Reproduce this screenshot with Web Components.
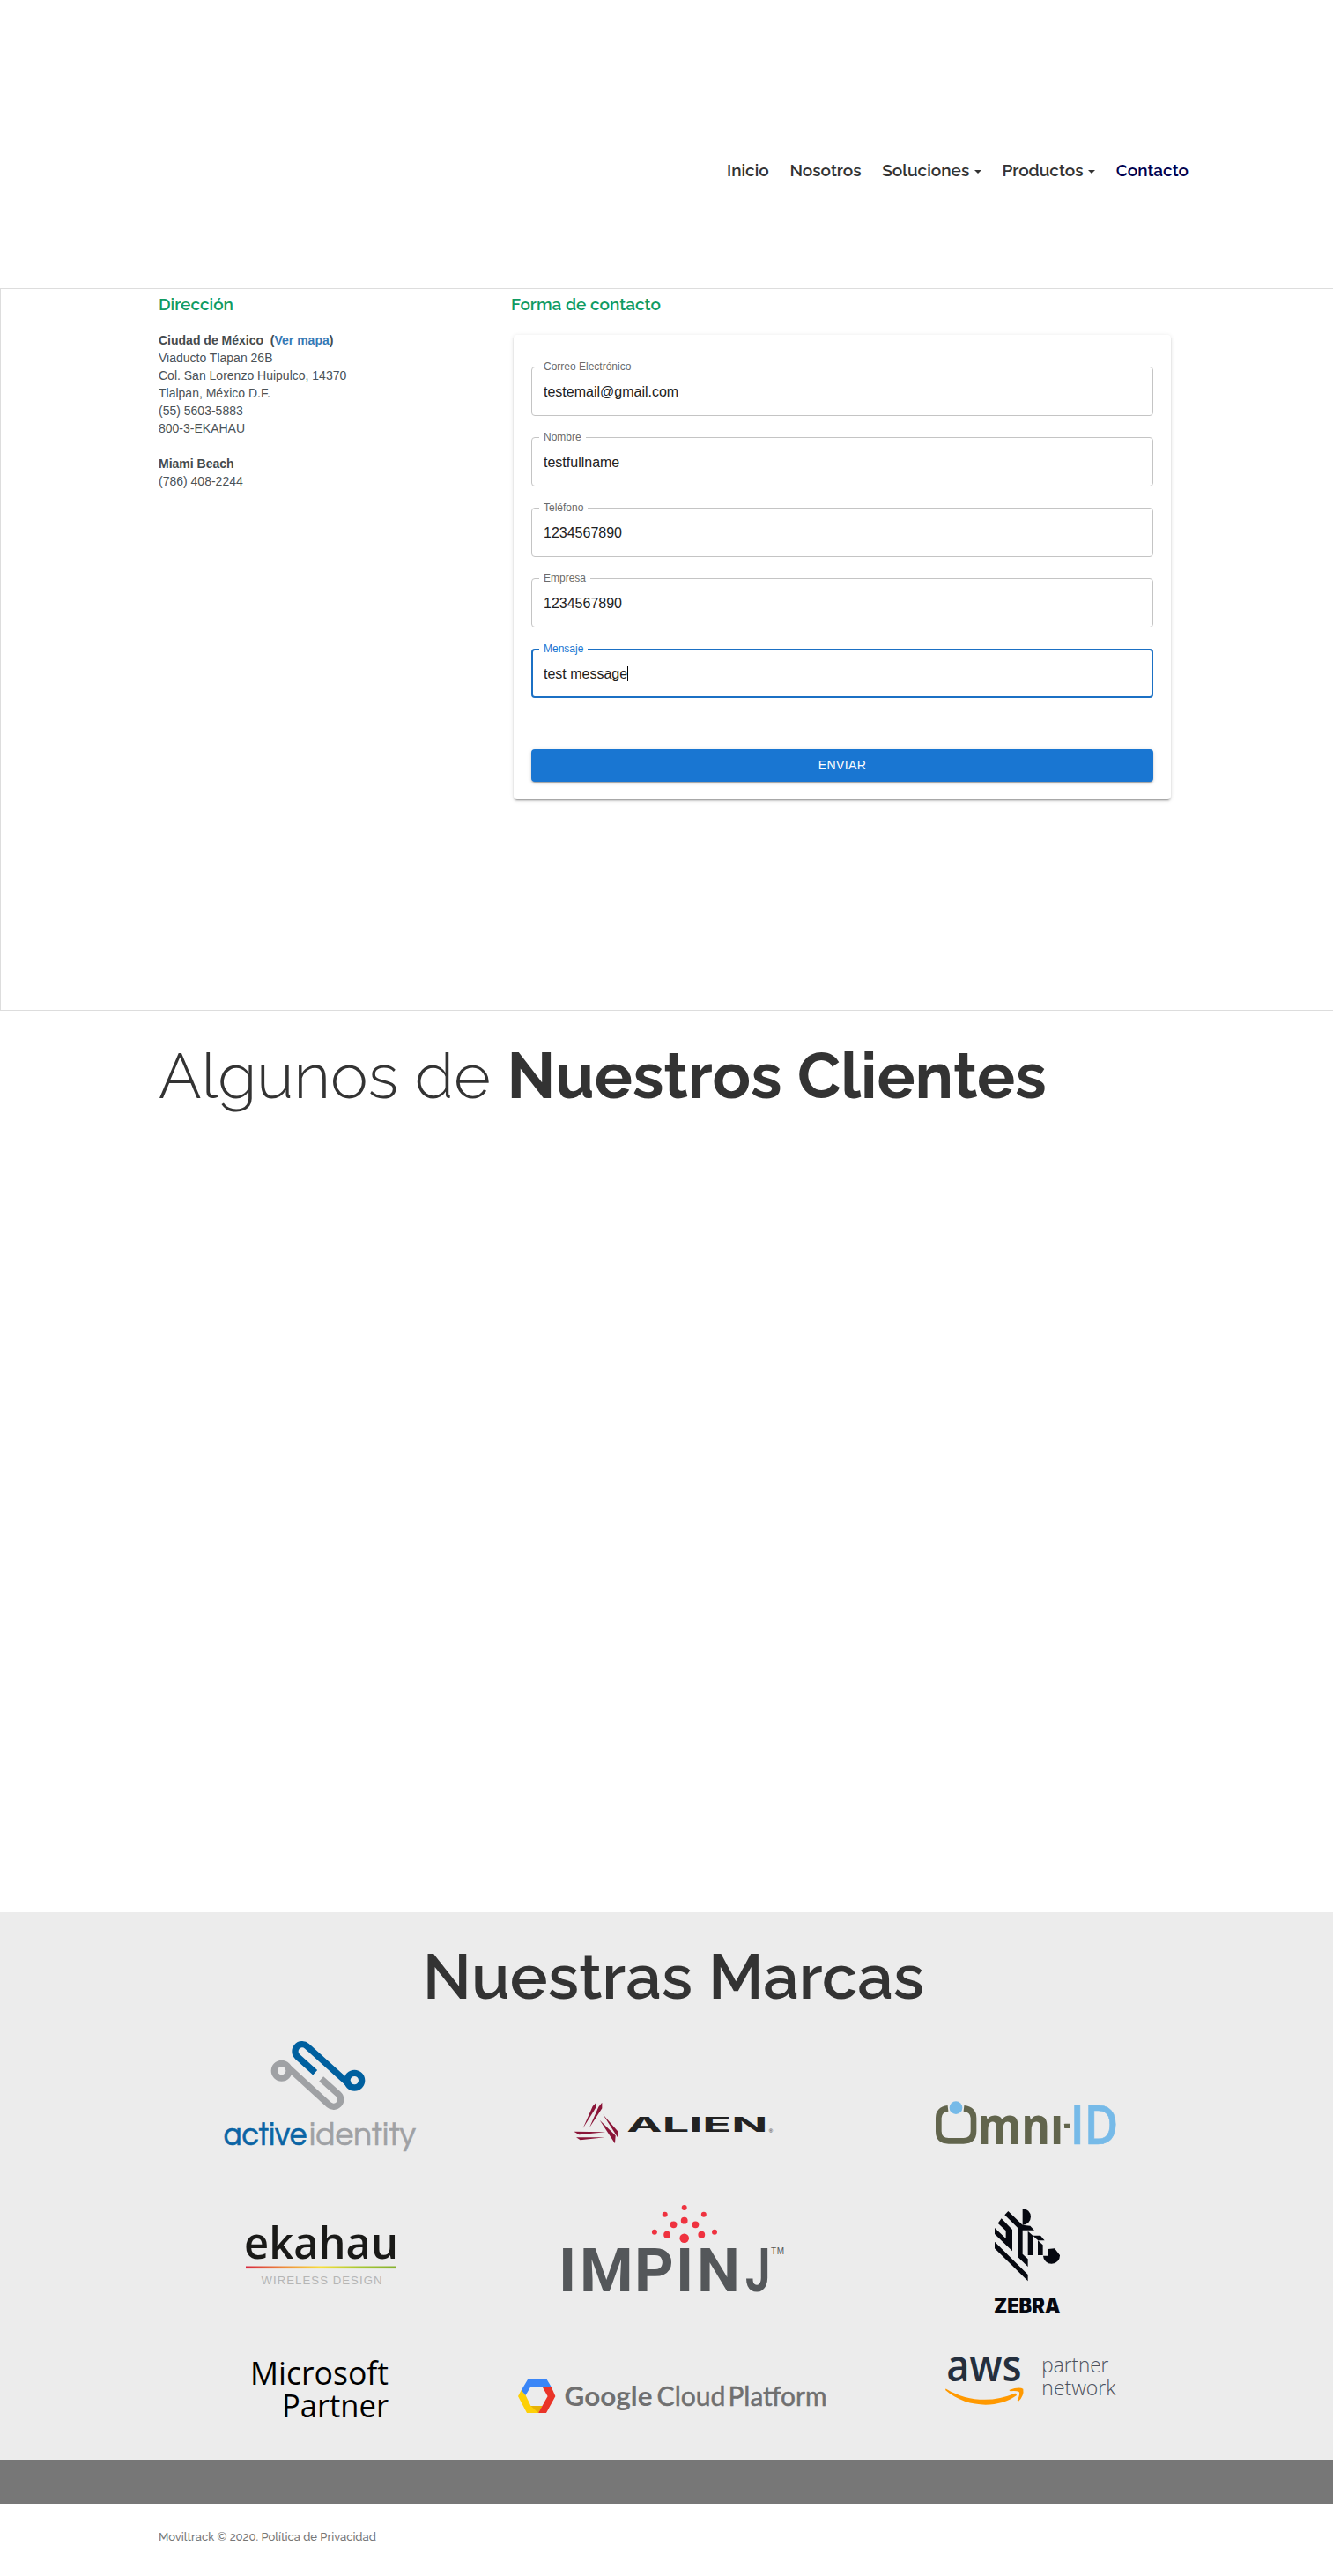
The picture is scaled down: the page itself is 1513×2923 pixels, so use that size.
<!DOCTYPE html>
<html lang="es">
<head>
<meta charset="utf-8">
<title>Moviltrack - Contacto</title>
<style>
html,body{margin:0;padding:0;background:#fff}
body{font-family:"Liberation Sans",Arial,sans-serif;font-size:14px;line-height:20px;color:#333}
</style>
</head>
<body>
<contact-page></contact-page>
<script>
const define = (name, html, setup) => {
  const t = document.createElement('template');
  t.innerHTML = html;
  customElements.define(name, class extends HTMLElement {
    connectedCallback() {
      if (this.shadowRoot) return;
      const root = this.attachShadow({mode: 'open'});
      root.append(t.content.cloneNode(true));
      if (setup) setup(this, root);
    }
  });
};

define('nav-item', `<style>:host{display:flex;align-items:center;gap:5.5px;color:#333;font:600 19px/20px Raleway,Lato,sans-serif}
:host([active]){color:#00004f}
i{display:none;border:4px solid transparent;border-top-color:currentColor;border-bottom:0;margin-top:3px}
:host([menu]) i{display:block}</style><slot></slot><i></i>`);

define('site-header', `<style>:host{display:block;height:327px}
nav{display:flex;justify-content:flex-end;gap:23.7px;padding:183px 164px 0 0}</style>
<nav>
<nav-item>Inicio</nav-item>
<nav-item>Nosotros</nav-item>
<nav-item menu>Soluciones</nav-item>
<nav-item menu>Productos</nav-item>
<nav-item active>Contacto</nav-item>
</nav>`);

define('section-title', `<style>:host{display:block;color:#109b63;font:600 19px/18px Raleway,Lato,sans-serif;height:20px}</style><slot></slot>`);

define('address-block', `<style>:host{display:block;width:400px;color:#4b5257}
section-title{margin-bottom:20px}
p{margin:0 0 20px}b{color:#444b4f}a{color:#337ab7;text-decoration:none}</style>
<section-title>Dirección</section-title>
<p><b>Ciudad de México&nbsp; (<a>Ver mapa</a>)</b><br>Viaducto Tlapan 26B<br>Col. San Lorenzo Huipulco, 14370<br>Tlalpan, México D.F.<br>(55) 5603-5883<br>800-3-EKAHAU</p>
<p><b>Miami Beach</b><br>(786) 408-2244</p>`);

define('outlined-field', `<style>:host{display:block;height:61px;margin-bottom:19px}
fieldset{box-sizing:border-box;height:61px;margin:0;padding:0 8px;border:1px solid #c4c4c4;border-radius:4px;min-width:0}
legend{font-size:12px;line-height:10px;padding:0 5px;color:#6b6b6b;height:11px}
.v{display:flex;align-items:center;height:44px;padding:1px 5px 0;font-size:16px;color:#212121}
.v::after{content:"";display:none;width:1px;height:17px;background:#000}
:host([focused]) fieldset{border:2px solid #1b70c4;padding:0 7px}
:host([focused]) legend{color:#1976d2}
:host([focused]) .v{height:43px}
:host([focused]) .v::after{display:block}</style>
<fieldset><legend></legend><div class="v"><slot></slot></div></fieldset>`, (el, root) => {
  root.querySelector('legend').textContent = el.getAttribute('label');
});

define('contact-form', `<style>:host{display:block}
section-title{margin-bottom:24px}
.card{box-sizing:border-box;width:746px;height:527px;margin-left:3px;padding:31px 20px 20px;border-radius:4px;background:#fff;
box-shadow:0 3px 1px -2px rgba(0,0,0,.2),0 2px 2px rgba(0,0,0,.14),0 1px 5px rgba(0,0,0,.12)}
.btn{box-sizing:border-box;padding-bottom:1px;margin-top:58px;height:37px;border-radius:4px;background:#1976d2;color:#fff;display:flex;align-items:center;justify-content:center;
letter-spacing:.4px;font-size:14px;box-shadow:0 3px 1px -2px rgba(0,0,0,.2),0 2px 2px rgba(0,0,0,.14),0 1px 5px rgba(0,0,0,.12)}</style>
<section-title>Forma de contacto</section-title>
<div class="card">
<outlined-field label="Correo Electrónico">testemail@gmail.com</outlined-field>
<outlined-field label="Nombre">testfullname</outlined-field>
<outlined-field label="Teléfono">1234567890</outlined-field>
<outlined-field label="Empresa">1234567890</outlined-field>
<outlined-field label="Mensaje" focused>test message</outlined-field>
<div class="btn">ENVIAR</div>
</div>`);

define('contact-section', `<style>:host{display:flex;box-sizing:border-box;height:820px;border:1px solid #ddd;border-right:0;padding:8px 0 0 179px}</style>
<address-block></address-block><contact-form></contact-form>`);

define('clients-section', `<style>:host{display:block;box-sizing:border-box;height:1022px;padding:34px 0 0 180px;color:#333}
h2{margin:0;font:300 72px/79px Raleway,Lato,sans-serif}b{font-weight:700}</style>
<h2>Algunos de <b>Nuestros Clientes</b></h2>`);

define('brand-logo', `<style>:host{display:block;width:390px}::slotted(svg){display:block}</style><slot></slot>`);

define('brands-section', `<style>:host{display:block;box-sizing:border-box;height:622px;background:#ececec;padding-top:34px;color:#333}
h2{margin:0 0 18px 16px;font:600 72px/79px Raleway,Lato,sans-serif;text-align:center}
.grid{display:grid;grid-template-columns:repeat(3,390px);grid-template-rows:180px 170px 120px;margin-left:171px}
svg{display:block}
text{font-family:Lato,sans-serif}
.geo{font-family:"Century Gothic","URW Gothic",Questrial,Jost,Lato,sans-serif}
.os{font-family:"Open Sans",sans-serif}.ls{font-family:"Liberation Sans",sans-serif}.in{font-family:Inter,sans-serif}.ro{font-family:Roboto,sans-serif}</style>
<h2>Nuestras Marcas</h2>
<div class="grid">
<brand-logo><svg width="390" height="180" viewBox="171 2300 390 180"><g transform="translate(240 2290) scale(.33333)">
<g fill="none" stroke="#9fa1a4" stroke-width="22"><circle cx="239" cy="179" r="25"/><path d="M374 207L432 259A24 24 0 0 1 400 295L258 165"/></g>
<g fill="none" stroke="#00609f" stroke-width="22"><circle cx="487" cy="212" r="25"/><path d="M353 185L293 131A24 24 0 0 1 325 95L468 224"/></g>
<text class="geo" x="41" y="432" font-size="110" font-weight="600" fill="#0a64a4" stroke="#0a64a4" stroke-width="2" textLength="284" lengthAdjust="spacingAndGlyphs">active</text>
<text class="geo" x="332" y="432" font-size="110" font-weight="500" fill="#9fa1a4" stroke="#9fa1a4" stroke-width="1.5" textLength="364" lengthAdjust="spacingAndGlyphs">identity</text></g></svg></brand-logo>
<brand-logo><svg width="390" height="180" viewBox="561 2300 390 180"><g transform="translate(630 2360) scale(.33333)">
<path fill="#8a1538" d="M140 77L138 96L95 165L128 90ZM160 77L160 97L117 163L148 92ZM163 118L216 178V200ZM152 137L206 190L204 217ZM64 176L172 178L82 187ZM72 196L170 196L86 205Z"/>
<text class="in" x="244" y="177" font-size="70" font-weight="700" fill="#222" textLength="480" lengthAdjust="spacingAndGlyphs">ALIEN</text>
<text class="ls" x="728" y="179" font-size="18" fill="#222">®</text></g></svg></brand-logo>
<brand-logo><svg width="390" height="180" viewBox="951 2300 390 180"><g transform="translate(1040 2360) scale(.33333)">
<path fill="none" stroke="#62654d" stroke-width="20" d="M108 97Q76 101 76 130V175Q76 208 110 208H161Q195 208 195 175V130Q195 101 162 97"/>
<circle cx="135" cy="95" r="22" fill="#76bae8"/>
<text class="os" x="210" y="218" font-size="180" font-weight="700" fill="#62654d" textLength="292" lengthAdjust="spacingAndGlyphs">mnı</text>
<rect x="504" y="149" width="21" height="16" rx="2" fill="#62654d"/>
<text class="os" x="524" y="218" font-size="182" font-weight="600" fill="#76bae8" stroke="#76bae8" stroke-width="2" textLength="164" lengthAdjust="spacingAndGlyphs">ID</text></g></svg></brand-logo>
<brand-logo><svg width="390" height="170" viewBox="171 2480 390 170">
<defs><linearGradient id="g"><stop offset="0" stop-color="#d7263d"/><stop offset=".25" stop-color="#ee8a3c"/><stop offset=".5" stop-color="#f8e03a"/><stop offset=".75" stop-color="#a8c832"/><stop offset="1" stop-color="#84b02f"/></linearGradient></defs>
<text class="os" x="277" y="2562.7" font-size="50" font-weight="600" fill="#1a1a18" textLength="175" lengthAdjust="spacingAndGlyphs">ekahau</text>
<rect x="279" y="2571.5" width="170.5" height="2.6" fill="url(#g)"/>
<text class="ls" x="296.5" y="2591.5" font-size="13.2" fill="#b5b5b5" textLength="137">WIRELESS DESIGN</text></svg></brand-logo>
<brand-logo><svg width="390" height="170" viewBox="561 2480 390 170">
<g fill="#ef323f"><circle cx="776.7" cy="2505" r="3"/><circle cx="754.7" cy="2512.7" r="3"/><circle cx="798.8" cy="2512.7" r="3"/><circle cx="776.7" cy="2519.7" r="3.9"/><circle cx="764.5" cy="2524.3" r="3.9"/><circle cx="789.4" cy="2524.3" r="3.9"/><circle cx="742.9" cy="2532.7" r="3"/><circle cx="811" cy="2532.7" r="3"/><circle cx="757.1" cy="2535.7" r="3.9"/><circle cx="796.3" cy="2535.7" r="3.9"/><circle cx="776.7" cy="2539.7" r="5.3"/></g>
<g class="imp" font-size="69.3" font-weight="700" fill="#54575a"><text class="ro" y="2600" x="634 658 720 767 791">IMPIN</text><text class="ro" transform="translate(846 2600) scale(.73 1)">J</text></g>
<text class="ls" x="875" y="2558" font-size="10" fill="#54575a" textLength="15">TM</text></svg></brand-logo>
<brand-logo><svg width="390" height="170" viewBox="951 2480 390 170"><g transform="translate(1040 2490) scale(.33333)">
<g fill="#060810"><path d="M267 161L380 273V295L267 184ZM267 114L305 150V124L278 98L290 82L327 120V193L267 135ZM301 70L313 57L362 104L388 107L402 122H362V203L380 220V246L345 212V113ZM362 48A28 28 0 0 1 362 104ZM380 125L397 140V207H380ZM397 140H423L437 157H415ZM414 157L431 172V207H414ZM432 209H449V186L471 184L489 207A28.5 28.5 0 0 1 432 209Z"/>
<text class="in" x="264" y="404" font-size="74" font-weight="900" textLength="226" lengthAdjust="spacingAndGlyphs">ZEBRA</text></g></g></svg></brand-logo>
<brand-logo><svg width="390" height="120" viewBox="171 2650 390 120">
<text class="os" font-size="37" font-weight="400"><tspan x="284" y="2705.7" textLength="157" lengthAdjust="spacingAndGlyphs">Microsoft</tspan><tspan x="320" y="2743" textLength="121" lengthAdjust="spacingAndGlyphs">Partner</tspan></text></svg></brand-logo>
<brand-logo><svg width="390" height="120" viewBox="561 2650 390 120">
<path fill="#fdd008" d="M591.7 2712L588 2719L598 2738H611L615.5 2730H602.5L596.6 2718Z"/>
<path fill="#e8b306" d="M602.5 2730H615.5L611 2738Z"/>
<path fill="#ea3428" d="M615.4 2708H625.5L630.4 2719L620 2738H611L621.6 2719Z"/>
<path fill="#3a86f7" d="M599 2700H620.7L625.5 2708H602.4L596.6 2718L591.7 2712.3Z"/>
<g fill="#707070"><text x="640.5" y="2730" font-size="31" font-weight="700" textLength="100" lengthAdjust="spacingAndGlyphs">Google</text>
<text x="745.5" y="2730" font-size="30" stroke="#707070" stroke-width=".5" textLength="78" lengthAdjust="spacingAndGlyphs">Cloud</text>
<text x="826.5" y="2730" font-size="30" stroke="#707070" stroke-width=".5" textLength="112" lengthAdjust="spacingAndGlyphs">Platform</text></g></svg></brand-logo>
<brand-logo><svg width="390" height="120" viewBox="951 2650 390 120"><g transform="translate(1040 2650) scale(.33333)">
<text class="os" x="103" y="157" font-size="146" font-weight="600" fill="#252f3e" textLength="256" lengthAdjust="spacingAndGlyphs">aws</text>
<path fill="#f90" d="M102 182C175 226 262 229 336 197Q344 196 341 205C280 249 172 249 100 187Q98 181 102 182ZM316 186Q350 174 364 182Q368 205 348 224Q342 224 346 216Q354 200 350 192Q340 188 320 190Z"/>
<text class="os" font-size="72" font-weight="300" fill="#4b505c"><tspan x="427" y="125" textLength="228" lengthAdjust="spacingAndGlyphs">partner</tspan><tspan x="427" y="203" textLength="252" lengthAdjust="spacingAndGlyphs">network</tspan></text></g></svg></brand-logo>
</div>`);

define('site-footer', `<style>:host{display:block;color:#777;font:500 13px/16px Raleway,Lato,sans-serif}
.bar{height:50px;background:#777}
.copy{height:82px;box-sizing:border-box;padding:30px 0 0 180px}</style>
<div class="bar"></div><div class="copy">Moviltrack © 2020. Política de Privacidad</div>`);

define('contact-page', `<style>:host{display:block;width:1513px;height:2923px;overflow:hidden}</style>
<site-header></site-header><contact-section></contact-section><clients-section></clients-section><brands-section></brands-section><site-footer></site-footer>`);
</script>
</body>
</html>
